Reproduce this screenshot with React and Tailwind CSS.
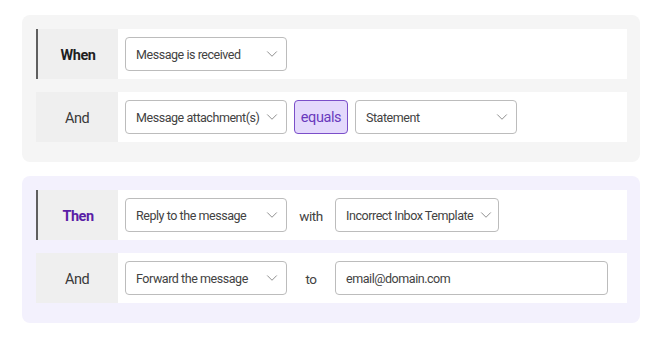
import { ChevronDown } from 'lucide-react';

function Select({ value, width }) {
  return (
    <div className={`flex h-[34px] shrink-0 items-center justify-between gap-1 rounded-[4px] border border-[#bcbcbc] bg-white pl-[10px] pr-[5px] ${width}`}>
      <span className="whitespace-nowrap pt-[2px] text-[12.5px] tracking-[-0.45px] text-[#424242]">{value}</span>
      <ChevronDown className="h-[18px] w-[18px] shrink-0 text-[#8c8c8c]" strokeWidth={1.3} />
    </div>
  );
}

function Row({ label, strong, purple, children }) {
  return (
    <div className="flex h-[50px] items-center bg-white">
      <div
        className={`flex h-full w-[82px] shrink-0 items-center justify-center bg-[#efefef] pt-[3px] text-[14.5px] tracking-[-0.5px] ${
          strong ? 'border-l-2 border-[#5f5f5f] font-bold' : 'text-[#3a3a3a]'
        } ${purple ? 'text-[#5a1ea6]' : strong ? 'text-[#1f1f1f]' : ''}`}
      >
        {label}
      </div>
      <div className="flex items-center gap-[7px] pl-[7px]">{children}</div>
    </div>
  );
}

function Joiner({ children }) {
  return <span className="w-[34px] pt-[2px] text-center text-[13.5px] tracking-[-0.4px] text-[#424242]">{children}</span>;
}

export default function App() {
  return (
    <div className="min-h-screen bg-white pt-[15px] pl-[22px] font-['Roboto',sans-serif]">
      {/* Trigger conditions */}
      <div className="w-[618px] rounded-[8px] bg-[#f5f5f5] pt-[14px] pb-[20px] pl-[14px] pr-[13px]">
        <div className="flex flex-col gap-[13px]">
          <Row label="When" strong>
            <Select value="Message is received" width="w-[162px]" />
          </Row>
          <Row label="And">
            <Select value="Message attachment(s)" width="w-[162px]" />
            <div className="flex h-[34px] w-[54px] items-center justify-center rounded-[4px] border border-[#7b4fc9] bg-[#e4d9fc] pt-[2px] text-[14.5px] tracking-[-0.4px] text-[#6a39bd]">
              equals
            </div>
            <Select value="Statement" width="w-[162px]" />
          </Row>
        </div>
      </div>

      {/* Actions */}
      <div className="mt-[14px] w-[618px] rounded-[8px] bg-[#f3f1fd] pt-[14px] pb-[20px] pl-[14px] pr-[13px]">
        <div className="flex flex-col gap-[13px]">
          <Row label="Then" strong purple>
            <Select value="Reply to the message" width="w-[162px]" />
            <Joiner>with</Joiner>
            <Select value="Incorrect Inbox Template" width="w-[164px]" />
          </Row>
          <Row label="And">
            <Select value="Forward the message" width="w-[162px]" />
            <Joiner>to</Joiner>
            <div className="flex h-[34px] w-[273px] items-center rounded-[4px] border border-[#bcbcbc] bg-white pl-[10px] pt-[2px] text-[12.5px] tracking-[-0.45px] text-[#424242]">
              email@domain.com
            </div>
          </Row>
        </div>
      </div>
    </div>
  );
}
